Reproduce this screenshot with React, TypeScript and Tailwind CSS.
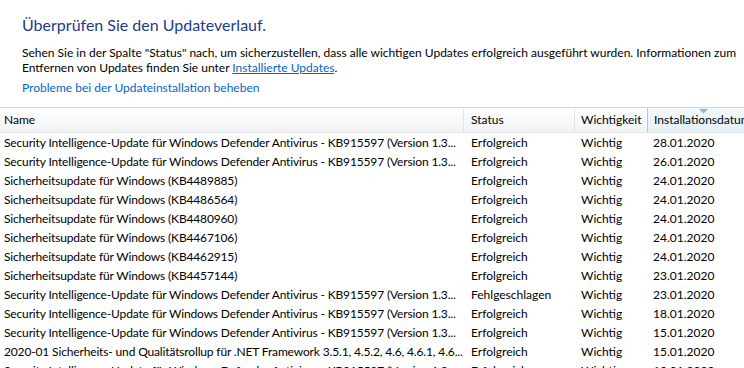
import React from "react";

const SI = "Security Intelligence-Update für Windows Defender Antivirus - KB915597 (Version 1.3...";
const SU = (kb: string) => `Sicherheitsupdate für Windows (${kb})`;

const rows: [string, string, string, string][] = [
  [SI, "Erfolgreich", "Wichtig", "28.01.2020"],
  [SI, "Erfolgreich", "Wichtig", "26.01.2020"],
  [SU("KB4489885"), "Erfolgreich", "Wichtig", "24.01.2020"],
  [SU("KB4486564"), "Erfolgreich", "Wichtig", "24.01.2020"],
  [SU("KB4480960"), "Erfolgreich", "Wichtig", "24.01.2020"],
  [SU("KB4467106"), "Erfolgreich", "Wichtig", "24.01.2020"],
  [SU("KB4462915"), "Erfolgreich", "Wichtig", "24.01.2020"],
  [SU("KB4457144"), "Erfolgreich", "Wichtig", "23.01.2020"],
  [SI, "Fehlgeschlagen", "Wichtig", "23.01.2020"],
  [SI, "Erfolgreich", "Wichtig", "18.01.2020"],
  [SI, "Erfolgreich", "Wichtig", "15.01.2020"],
  ["2020-01 Sicherheits- und Qualitätsrollup für .NET Framework 3.5.1, 4.5.2, 4.6, 4.6.1, 4.6...", "Erfolgreich", "Wichtig", "15.01.2020"],
  [SI, "Erfolgreich", "Wichtig", "13.01.2020"],
];

export default function App() {
  return (
    <div
      className="w-[744px] h-[368px] overflow-hidden bg-white text-[12px] text-black"
      style={{ fontFamily: "Lato, 'Liberation Sans', sans-serif" }}
    >
      <div className="pl-[22px] pt-[14px]">
        <h1 className="text-[16px] leading-[22px] text-[#1e3a8a] whitespace-nowrap">
          Überprüfen Sie den Updateverlauf.
        </h1>
        <p className="mt-[9px] leading-[15px] whitespace-nowrap">
          Sehen Sie in der Spalte "Status" nach, um sicherzustellen, dass alle wichtigen Updates erfolgreich ausgeführt wurden. Informationen zum
          <br />
          Entfernen von Updates finden Sie unter <span className="text-[#0066cc] underline">Installierte Updates</span>.
        </p>
        <div className="mt-[5px] leading-[15px] text-[#0066cc] whitespace-nowrap">
          Probleme bei der Updateinstallation beheben
        </div>
      </div>

      <div className="mt-[12px] border-t border-[#d5d5d5]">
        <div className="grid grid-cols-[464px_111px_72px_1fr] h-[25px] border-b border-[#e5e5e5] bg-gradient-to-b from-white to-[#f1f2f4] leading-[24px]">
          <div className="pl-[4px] border-r border-[#e3e4e6]">Name</div>
          <div className="pl-[7px] border-r border-[#e3e4e6]">Status</div>
          <div className="pl-[6px]">Wichtigkeit</div>
          <div className="relative pl-[6px] border-l border-[#a8cbe8] bg-gradient-to-b from-[#f4f9fd] to-[#e4eff9] whitespace-nowrap overflow-hidden">
            Installationsdatum
            <svg className="absolute left-[51px] top-[1px]" width="9" height="5" viewBox="0 0 9 5">
              <path d="M0 0H9L4.5 4.5Z" fill="#8fb3d3" />
            </svg>
          </div>
        </div>
        {rows.map((r, i) => (
          <div key={i} className="grid grid-cols-[464px_111px_72px_1fr] h-[19px] leading-[19px] whitespace-nowrap">
            <div className="pl-[4px] overflow-hidden tracking-[-0.15px]">{r[0]}</div>
            <div className="pl-[7px]">{r[1]}</div>
            <div className="pl-[6px]">{r[2]}</div>
            <div className="pl-[6px]">{r[3]}</div>
          </div>
        ))}
      </div>
    </div>
  );
}
